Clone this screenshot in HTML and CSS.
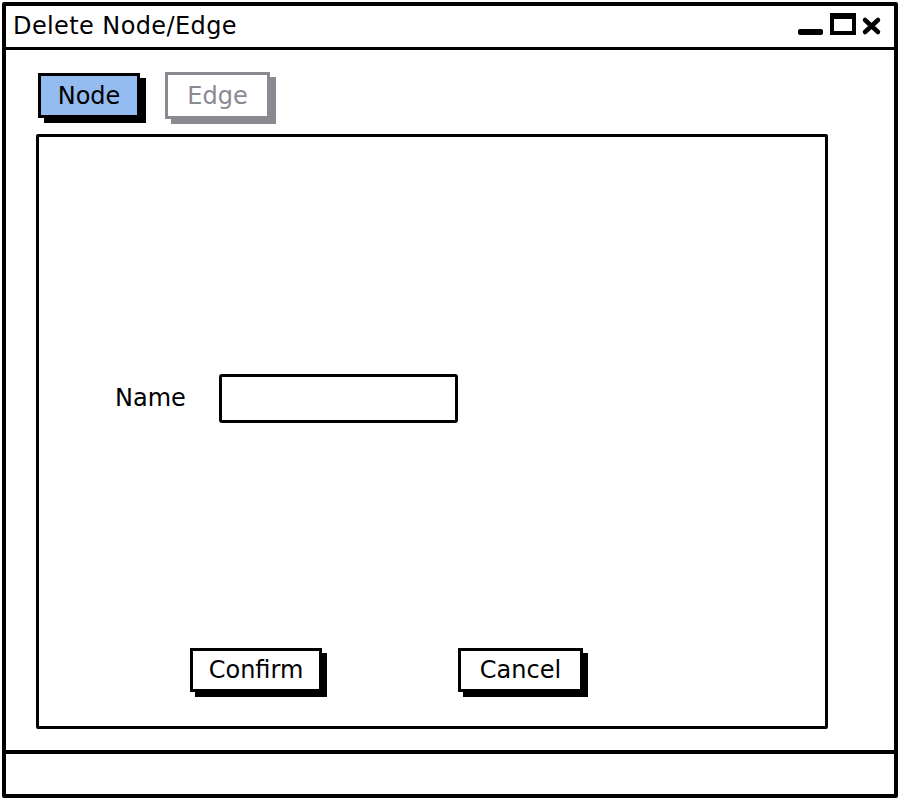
FILE: index.html
```html
<!DOCTYPE html>
<html>
<head>
<meta charset="utf-8">
<link rel="stylesheet" href="styles.css">
</head>
<body>
<div class="window">
  <div class="titlebar">
    <span class="title">Delete Node/Edge</span>
    <svg class="controls" width="90" height="30" viewBox="0 0 90 30">
      <rect x="2" y="18" width="25" height="6" rx="2" fill="#000"/>
      <rect x="36" y="4" width="22" height="18" fill="none" stroke="#000" stroke-width="4"/>
      <rect x="34" y="2" width="26" height="6" fill="#000"/>
      <path d="M69 9 L82 21 M82 9 L69 21" stroke="#000" stroke-width="4.5" stroke-linecap="round"/>
    </svg>
  </div>
  <div class="content">
    <div class="tabs">
      <div class="tab tab-active">Node</div>
      <div class="tab tab-inactive">Edge</div>
    </div>
    <div class="panel">
      <div class="form-row">
        <label class="label">Name</label>
        <div class="input"></div>
      </div>
      <div class="buttons">
        <div class="btn btn-confirm">Confirm</div>
        <div class="btn btn-cancel">Cancel</div>
      </div>
    </div>
  </div>
  <div class="statusbar"></div>
</div>
</body>
</html>
```
FILE: styles.css
```css
* { box-sizing: border-box; }
html, body { margin: 0; padding: 0; background: #fff; }
body {
  font-family: "DejaVu Sans", "Open Sans", sans-serif;
  color: #000;
  width: 900px;
  height: 800px;
  overflow: hidden;
}
.window {
  margin: 2px;
  width: 896px;
  height: 796px;
  border: 4px solid #000;
  border-radius: 2px;
  display: flex;
  flex-direction: column;
}
.titlebar {
  height: 44px;
  border-bottom: 3px solid #000;
  display: flex;
  align-items: center;
  padding-left: 7px;
  position: relative;
  flex: none;
}
.title {
  font-size: 24px;
  line-height: 1;
  margin-top: -2px;
  letter-spacing: 0.4px;
}
.controls {
  position: absolute;
  right: 8px;
  top: 5px;
}
.content {
  flex: 1;
  padding: 23px 0 0 32px;
  display: flex;
  flex-direction: column;
}
.tabs {
  display: flex;
  gap: 25px;
  height: 46px;
}
.tab {
  width: 102px;
  height: 45px;
  border: 3px solid #000;
  display: flex;
  align-items: center;
  justify-content: center;
  font-size: 24px;
}
.tab-active {
  background: #95bcf1;
  box-shadow: 6px 5px 0 #000;
}
.tab-inactive {
  color: #8a8a91;
  border-color: #8a8a91;
  background: #fff;
  width: 105px;
  height: 47px;
  margin-top: -1px;
  box-shadow: 6px 5px 0 #8a8a91;
}
.panel {
  margin-top: 15px;
  margin-left: -2px;
  width: 792px;
  height: 595px;
  border: 3px solid #000;
  border-radius: 2px;
  display: flex;
  flex-direction: column;
}
.form-row {
  display: flex;
  align-items: center;
  margin-top: 237px;
  padding-left: 76px;
}
.label {
  font-size: 24px;
  width: 104px;
  padding-bottom: 1px;
}
.input {
  width: 239px;
  height: 49px;
  border: 3px solid #000;
  border-radius: 3px;
}
.buttons {
  display: flex;
  margin-top: 225px;
  padding-left: 151px;
}
.btn {
  height: 44px;
  border: 3px solid #000;
  box-shadow: 5px 5px 0 #000;
  display: flex;
  align-items: center;
  justify-content: center;
  font-size: 24px;
}
.btn-confirm { width: 132px; }
.btn-cancel { width: 125px; margin-left: 136px; }
.statusbar {
  height: 44px;
  border-top: 4px solid #000;
  flex: none;
}
```
